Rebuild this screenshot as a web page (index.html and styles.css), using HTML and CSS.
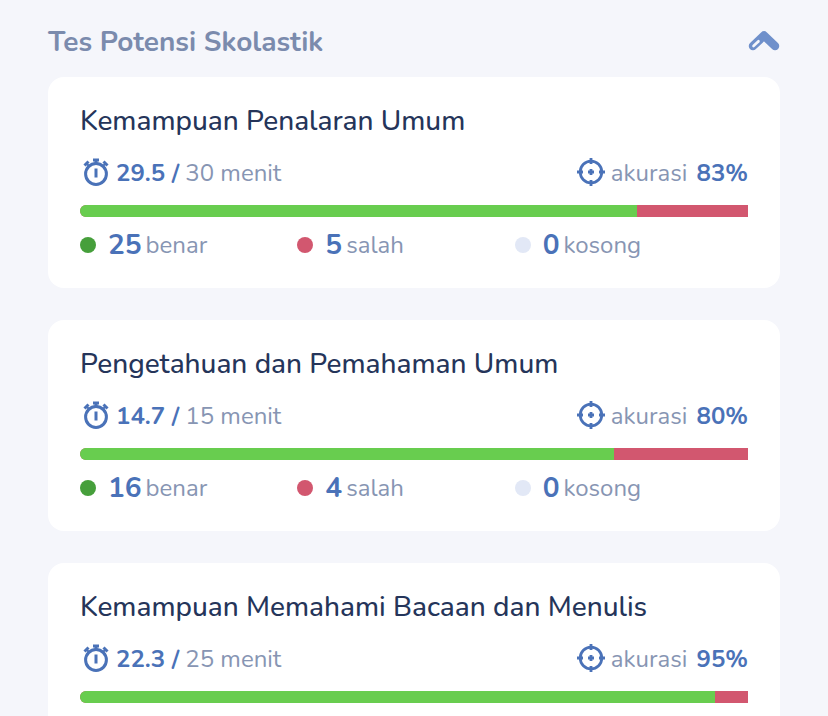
FILE: index.html
```
<!DOCTYPE html>
<html lang="id">
<head>
  <meta charset="UTF-8">
  <meta name="viewport" content="width=device-width, initial-scale=1">
  <title>Tes Potensi Skolastik</title>
  <link rel="stylesheet" href="styles.css">
</head>
<body>
  <!-- Shared icons -->
  <svg class="icon-defs" aria-hidden="true">
    <symbol id="icon-timer" viewBox="0 0 32 32">
      <g fill="none" stroke="currentColor" stroke-width="3">
        <circle cx="16" cy="17" r="10.4"/>
        <path d="M16 11.500v9M13 3h6M16 3v4"/>
        <path d="M4.500 8.500l4-4M27.500 8.500l-4-4"/>
        <path d="M6 6l3 3M26 6l-3 3" stroke-width="2"/>
      </g>
    </symbol>
    <symbol id="icon-target" viewBox="0 0 32 32">
      <g fill="none" stroke="currentColor" stroke-width="2.8">
        <circle cx="16" cy="15" r="10.800"/>
        <path d="M16 1v6M16 23v6M2 15h6M24 15h6M13 15h6M16 12v6"/>
      </g>
    </symbol>
  </svg>

  <main class="page">
    <!-- Section header -->
    <header class="section-header">
      <h1 class="section-title">Tes Potensi Skolastik</h1>
      <button class="collapse-button" type="button" aria-label="Tutup bagian" aria-expanded="true">
        <svg class="collapse-icon" viewBox="0 0 32 24" aria-hidden="true">
          <path d="M5 16L16 5.500L27 16" fill="none" stroke="#6f90cb" stroke-width="8.500" stroke-linecap="round" stroke-linejoin="round"/>
          <path d="M5.500 16l5-4.800" fill="none" stroke="#f5f6fb" stroke-width="2.600" stroke-linecap="round"/>
        </svg>
      </button>
    </header>

    <!-- Subtest cards -->
    <section class="card">
      <h2 class="card-title">Kemampuan Penalaran Umum</h2>
      <div class="meta">
        <div class="meta-item">
          <svg class="icon" aria-hidden="true"><use href="#icon-timer"/></svg>
          <span><strong>29.5 /</strong> 30 menit</span>
        </div>
        <div class="meta-item">
          <svg class="icon" aria-hidden="true"><use href="#icon-target"/></svg>
          <span class="accuracy">akurasi <strong>83%</strong></span>
        </div>
      </div>
      <div class="bar"><div class="bar-fill" style="width: 83.4%"></div></div>
      <ul class="legend">
        <li class="legend-item"><span class="dot dot-correct"></span><strong>25</strong> benar</li>
        <li class="legend-item"><span class="dot dot-wrong"></span><strong>5</strong> salah</li>
        <li class="legend-item"><span class="dot dot-empty"></span><strong>0</strong> kosong</li>
      </ul>
    </section>

    <section class="card">
      <h2 class="card-title">Pengetahuan dan Pemahaman Umum</h2>
      <div class="meta">
        <div class="meta-item">
          <svg class="icon" aria-hidden="true"><use href="#icon-timer"/></svg>
          <span><strong>14.7 /</strong> 15 menit</span>
        </div>
        <div class="meta-item">
          <svg class="icon" aria-hidden="true"><use href="#icon-target"/></svg>
          <span class="accuracy">akurasi <strong>80%</strong></span>
        </div>
      </div>
      <div class="bar"><div class="bar-fill" style="width: 80%"></div></div>
      <ul class="legend">
        <li class="legend-item"><span class="dot dot-correct"></span><strong>16</strong> benar</li>
        <li class="legend-item"><span class="dot dot-wrong"></span><strong>4</strong> salah</li>
        <li class="legend-item"><span class="dot dot-empty"></span><strong>0</strong> kosong</li>
      </ul>
    </section>

    <section class="card">
      <h2 class="card-title">Kemampuan Memahami Bacaan dan Menulis</h2>
      <div class="meta">
        <div class="meta-item">
          <svg class="icon" aria-hidden="true"><use href="#icon-timer"/></svg>
          <span><strong>22.3 /</strong> 25 menit</span>
        </div>
        <div class="meta-item">
          <svg class="icon" aria-hidden="true"><use href="#icon-target"/></svg>
          <span class="accuracy">akurasi <strong>95%</strong></span>
        </div>
      </div>
      <div class="bar"><div class="bar-fill" style="width: 95%"></div></div>
    </section>
  </main>
</body>
</html>
```
FILE: styles.css
```
:root {
  --background-color: #f5f6fb;
  --surface-color: #ffffff;
  --text-primary: #25355a;
  --text-secondary: #8795b3;
  --heading-color: #7b8bad;
  --accent-color: #4a72b8;
  --correct-color: #68cd4f;
  --wrong-color: #d2576f;
}

*,
*::before,
*::after {
  box-sizing: border-box;
}

body {
  margin: 0;
  background: var(--background-color);
  color: var(--text-secondary);
  font-family: Nunito, "Noto Sans", sans-serif;
  font-size: 24px;
  line-height: 40px;
}

h1,
h2,
ul {
  margin: 0;
  padding: 0;
}

strong {
  color: var(--accent-color);
  font-weight: 700;
}

.icon-defs {
  display: none;
}

.page {
  padding: 22px 48px 0;
}

/* Section header */
.section-header {
  display: flex;
  align-items: center;
  justify-content: space-between;
  margin-bottom: 15px;
}

.section-title {
  color: var(--heading-color);
  font-size: 28px;
  font-weight: 700;
}

.collapse-button {
  display: flex;
  padding: 0;
  border: none;
  background: none;
  cursor: pointer;
}

.collapse-icon {
  width: 32px;
  height: 24px;
}

/* Cards */
.card {
  padding: 24px 32px 23px;
  border-radius: 16px;
  background: var(--surface-color);
}

.card + .card {
  margin-top: 32px;
}

.card-title {
  color: var(--text-primary);
  font-size: 28px;
  font-weight: 500;
}

.meta {
  display: flex;
  align-items: center;
  justify-content: space-between;
  margin: 12px 0;
}

.meta-item {
  display: flex;
  align-items: center;
  gap: 4px;
}

.icon {
  width: 32px;
  height: 32px;
  color: var(--accent-color);
}

.accuracy strong {
  margin-left: 3px;
}

/* Progress bar */
.bar {
  height: 12px;
  margin-bottom: 8px;
  border-radius: 6px 0 0 6px;
  background: var(--wrong-color);
  overflow: hidden;
}

.bar-fill {
  height: 100%;
  background: var(--correct-color);
}

/* Legend */
.legend {
  display: grid;
  grid-template-columns: repeat(3, 1fr);
  padding-right: 16px;
  list-style: none;
}

.legend-item {
  display: flex;
  align-items: center;
  gap: 4px;
}

.legend-item strong {
  font-size: 28px;
}

.dot {
  width: 16px;
  height: 16px;
  margin-right: 8px;
  border-radius: 50%;
}

.dot-correct {
  background: #469f3b;
}

.dot-wrong {
  background: var(--wrong-color);
}

.dot-empty {
  background: #e2e8f6;
}
```
